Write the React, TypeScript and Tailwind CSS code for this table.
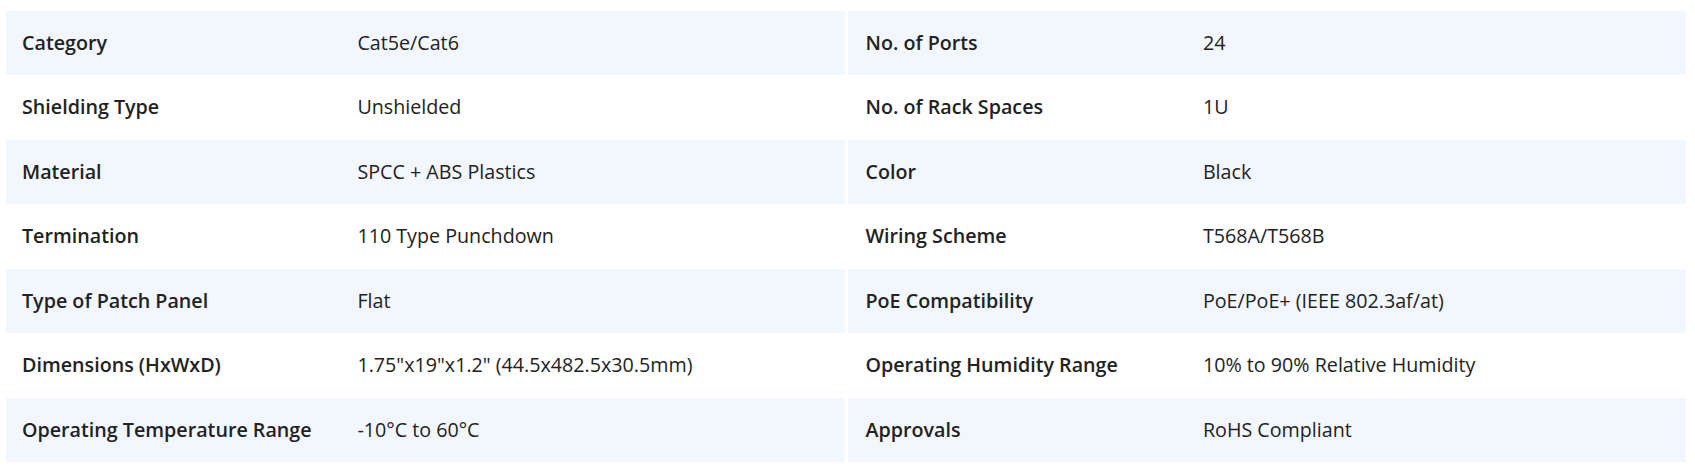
const left: [string, string][] = [
  ['Category', 'Cat5e/Cat6'],
  ['Shielding Type', 'Unshielded'],
  ['Material', 'SPCC + ABS Plastics'],
  ['Termination', '110 Type Punchdown'],
  ['Type of Patch Panel', 'Flat'],
  ['Dimensions (HxWxD)', '1.75"x19"x1.2" (44.5x482.5x30.5mm)'],
  ['Operating Temperature Range', '-10°C to 60°C'],
]

const right: [string, string][] = [
  ['No. of Ports', '24'],
  ['No. of Rack Spaces', '1U'],
  ['Color', 'Black'],
  ['Wiring Scheme', 'T568A/T568B'],
  ['PoE Compatibility', 'PoE/PoE+ (IEEE 802.3af/at)'],
  ['Operating Humidity Range', '10% to 90% Relative Humidity'],
  ['Approvals', 'RoHS Compliant'],
]

function SpecTable({ rows, labelPad, valuePad }: { rows: [string, string][]; labelPad: string; valuePad: string }) {
  return (
    <div className="flex flex-col">
      {rows.map(([k, v], i) => (
        <div
          key={k}
          className={`grid h-[64.5px] grid-cols-[40%_60%] items-center ${i % 2 === 0 ? 'bg-[#f2f7fd]' : 'bg-white'}`}
        >
          <div className={`${labelPad} font-semibold`}>{k}</div>
          <div className={valuePad}>{v}</div>
        </div>
      ))}
    </div>
  )
}

export default function App() {
  return (
    <div
      className="grid w-[1695px] grid-cols-2 gap-x-[3px] pt-[10.5px] pr-[9px] pl-[6px] text-[19.7px] text-[#222]"
      style={{ fontFamily: '"Open Sans", sans-serif' }}
    >
      <SpecTable rows={left} labelPad="pl-4" valuePad="pl-4" />
      <SpecTable rows={right} labelPad="pl-[18px]" valuePad="pl-5" />
    </div>
  )
}
